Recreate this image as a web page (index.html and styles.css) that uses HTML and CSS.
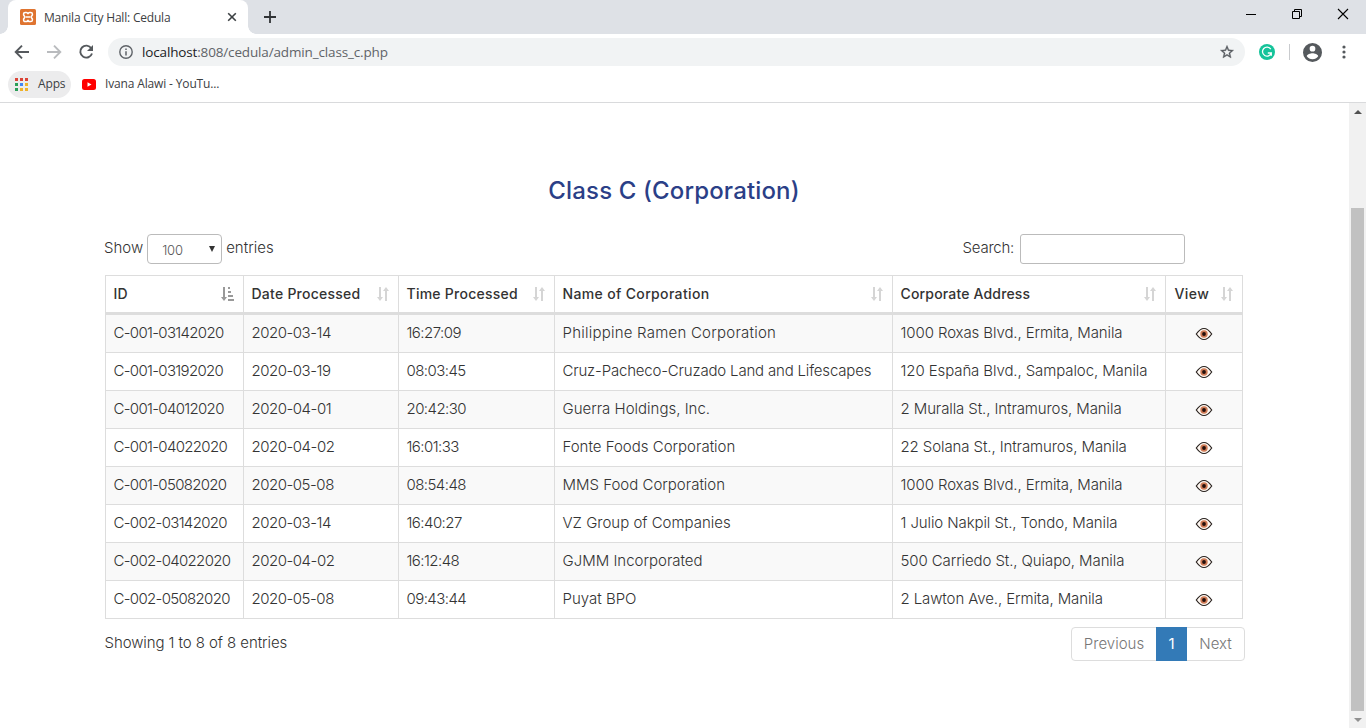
FILE: index.html
```html
<!DOCTYPE html>
<html lang="en">
<head>
<meta charset="utf-8">
<title>Manila City Hall: Cedula</title>
<link rel="stylesheet" href="styles.css">
</head>
<body>
<svg class="defs" width="0" height="0" aria-hidden="true">
  <symbol id="sort" viewBox="0 0 14 14"><path d="M3 0h2v10h2L4 14 1 10h2zM9 14h2V4h2L10 0 7 4h2z"/></symbol>
  <symbol id="sort-asc" viewBox="0 0 15 14"><path d="M3 0h2v10h2L4 14 1 10h2zM8 0h2v2H8zM8 4h3v2H8zM8 8h5v2H8zM8 12h6v2H8z"/></symbol>
  <symbol id="eye" viewBox="0 0 18 14"><path d="M1.300 7Q9-4 16.700 7 9 18 1.300 7z" fill="#fff8f2" stroke="#28211e" stroke-width="1.200"/><circle cx="9" cy="7" r="3.700" fill="#cf7a55"/><circle cx="9" cy="7" r="1.900" fill="#24100c"/></symbol>
</svg>
<div class="browser">
  <header class="tabbar">
    <div class="tab">
      <svg class="favicon" viewBox="0 0 16 16"><rect width="16" height="16" rx="1.500" fill="#df7430"/><path d="M5.300 3.400h.9Q8 3.400 8 5.200q0-1.800 1.800-1.800h.9q1.700 0 1.700 1.700v.9L11 8l1.400 2v.9q0 1.700-1.700 1.700h-.9Q8 12.600 8 10.800q0 1.800-1.800 1.800h-.9q-1.700 0-1.700-1.700V10L5 8 3.600 6v-.9q0-1.700 1.700-1.700zM6 8h4" fill="none" stroke="#fff" stroke-width="1.500"/></svg>
      <span class="tab-title">Manila City Hall: Cedula</span>
      <svg class="tab-close" viewBox="0 0 10 10"><path d="M1.200 1.200l7.600 7.600M8.800 1.200L1.200 8.800" stroke="#3c4043" stroke-width="1.600"/></svg>
    </div>
    <svg class="plus" viewBox="0 0 12 12"><path d="M6 0v12M0 6h12" stroke="#303336" stroke-width="1.800"/></svg>
    <div class="window-buttons">
      <svg viewBox="0 0 12 12"><path d="M1 6.500h10" stroke="#000"/></svg>
      <svg viewBox="0 0 12 12"><path d="M1.500 3.500h7v7h-7zM3.500 3.500v-2h7v7h-2" fill="none" stroke="#000"/></svg>
      <svg viewBox="0 0 12 12"><path d="M1 1l10 10M11 1L1 11" stroke="#000" stroke-width="1.100"/></svg>
    </div>
  </header>
  <div class="toolbar">
    <svg class="nav" viewBox="0 0 16 16"><path d="M15 8H2M8 1.700L1.700 8 8 14.300" fill="none" stroke="#55595d" stroke-width="1.900"/></svg>
    <svg class="nav" viewBox="0 0 16 16"><path d="M1 8h13M8 1.700L14.300 8 8 14.300" fill="none" stroke="#b9bbbe" stroke-width="1.900"/></svg>
    <svg class="nav" viewBox="0 0 16 16"><path d="M13.300 4.300A6 6 0 1 0 14 9.500" fill="none" stroke="#55595d" stroke-width="1.900"/><path d="M15 1v6H9z" fill="#55595d"/></svg>
    <div class="address">
      <svg class="info" viewBox="0 0 14 14"><circle cx="7" cy="7" r="6.200" fill="none" stroke="#5f6368" stroke-width="1.400"/><path d="M7 6.200v4.300M7 3.400v1.500" stroke="#5f6368" stroke-width="1.500"/></svg>
      <span class="url"><b>localhost</b>:808/cedula/admin_class_c.php</span>
      <svg class="star" viewBox="0 0 24 24"><path d="M22 9.240l-7.190-.62L12 2 9.190 8.630 2 9.240l5.460 4.730L5.820 21 12 17.270 18.180 21l-1.630-7.030L22 9.240zM12 15.400l-3.760 2.270 1-4.280-3.320-2.880 4.380-.38L12 6.100l1.710 4.040 4.380.38-3.320 2.880 1 4.280L12 15.400z" fill="#55595d" stroke="#55595d" stroke-width=".5"/></svg>
    </div>
    <svg class="grammarly" viewBox="0 0 16 16"><circle cx="8" cy="8" r="8" fill="#15c39a"/><path d="M11.800 5.200A4.500 4.500 0 1 0 12.300 9H8.800M12.300 8.500v3.300" fill="none" stroke="#fff" stroke-width="1.300"/></svg>
    <i class="separator"></i>
    <svg class="avatar" viewBox="2 2 20 20"><path d="M12 2a10 10 0 1 0 0 20 10 10 0 0 0 0-20zm0 3a3 3 0 1 1 0 6 3 3 0 0 1 0-6zm0 14.200a7.200 7.200 0 0 1-6-3.220c.03-1.990 4-3.080 6-3.080s5.970 1.090 6 3.080a7.200 7.200 0 0 1-6 3.220z" fill="#55595d"/></svg>
    <svg class="menu" viewBox="0 0 4 14"><g fill="#55595d"><circle cx="2" cy="2" r="1.600"/><circle cx="2" cy="7" r="1.600"/><circle cx="2" cy="12" r="1.600"/></g></svg>
  </div>
  <div class="bookmarks">
    <div class="apps"><svg viewBox="0 0 13 13"><path d="M0 0h3v3H0zM5 0h3v3H5zM10 0h3v3h-3z" fill="#db4437"/><path d="M0 5h3v3H0zM0 10h3v3H0z" fill="#2b9f58"/><path d="M5 5h3v3H5z" fill="#4285f4"/><path d="M10 5h3v3h-3zM5 10h3v3H5zM10 10h3v3h-3z" fill="#efb22a"/></svg><span class="apps-label">Apps</span></div>
    <svg class="youtube" viewBox="0 0 14 11"><rect width="14" height="11" rx="2.500" fill="#f00"/><path d="M5.500 3.300v4.400l4-2.200z" fill="#fff"/></svg>
    <span class="bookmark-label">Ivana Alawi - YouTu...</span>
  </div>
</div>
<div class="viewport">
  <main>
    <h1><span>Class C (Corporation)</span></h1>
    <div class="controls">
      <label class="length"><span class="show">Show</span> <span class="select"><span>100</span><svg viewBox="0 0 6 6"><path d="M0 0h6L3 6z" fill="#333"/></svg></span> <span class="entries">entries</span></label>
      <label class="search"><span>Search:</span><input type="text"></label>
    </div>
    <table>
      <colgroup><col class="c-id"><col class="c-date"><col class="c-time"><col class="c-name"><col class="c-address"><col class="c-view"></colgroup>
      <thead><tr>
        <th><div><span class="h-id">ID</span><svg class="active"><use href="#sort-asc"/></svg></div></th>
        <th><div><span class="h-date">Date Processed</span><svg><use href="#sort"/></svg></div></th>
        <th><div><span class="h-time">Time Processed</span><svg><use href="#sort"/></svg></div></th>
        <th><div><span class="h-name">Name of Corporation</span><svg><use href="#sort"/></svg></div></th>
        <th><div><span class="h-address">Corporate Address</span><svg><use href="#sort"/></svg></div></th>
        <th><div><span class="h-view">View</span><svg><use href="#sort"/></svg></div></th>
      </tr></thead>
      <tbody>
        <tr><td>C-001-03142020</td><td>2020-03-14</td><td>16:27:09</td><td class="loose">Philippine Ramen Corporation</td><td>1000 Roxas Blvd., Ermita, Manila</td><td><svg><use href="#eye"/></svg></td></tr>
        <tr><td>C-001-03192020</td><td>2020-03-19</td><td>08:03:45</td><td class="tight">Cruz-Pacheco-Cruzado Land and Lifescapes</td><td>120 España Blvd., Sampaloc, Manila</td><td><svg><use href="#eye"/></svg></td></tr>
        <tr><td>C-001-04012020</td><td>2020-04-01</td><td>20:42:30</td><td>Guerra Holdings, Inc.</td><td>2 Muralla St., Intramuros, Manila</td><td><svg><use href="#eye"/></svg></td></tr>
        <tr><td>C-001-04022020</td><td>2020-04-02</td><td>16:01:33</td><td>Fonte Foods Corporation</td><td>22 Solana St., Intramuros, Manila</td><td><svg><use href="#eye"/></svg></td></tr>
        <tr><td>C-001-05082020</td><td>2020-05-08</td><td>08:54:48</td><td>MMS Food Corporation</td><td>1000 Roxas Blvd., Ermita, Manila</td><td><svg><use href="#eye"/></svg></td></tr>
        <tr><td>C-002-03142020</td><td>2020-03-14</td><td>16:40:27</td><td>VZ Group of Companies</td><td>1 Julio Nakpil St., Tondo, Manila</td><td><svg><use href="#eye"/></svg></td></tr>
        <tr><td>C-002-04022020</td><td>2020-04-02</td><td>16:12:48</td><td>GJMM Incorporated</td><td>500 Carriedo St., Quiapo, Manila</td><td><svg><use href="#eye"/></svg></td></tr>
        <tr><td>C-002-05082020</td><td>2020-05-08</td><td>09:43:44</td><td>Puyat BPO</td><td>2 Lawton Ave., Ermita, Manila</td><td><svg><use href="#eye"/></svg></td></tr>
      </tbody>
    </table>
    <footer>
      <span class="summary">Showing 1 to 8 of 8 entries</span>
      <nav class="pages"><span class="prev">Previous</span><span class="current">1</span><span class="next">Next</span></nav>
    </footer>
  </main>
  <aside class="scrollbar">
    <svg viewBox="0 0 8 4"><path d="M0 4h8L4 0z" fill="#505050"/></svg>
    <div class="thumb"></div>
    <svg viewBox="0 0 8 4"><path d="M0 0h8L4 4z" fill="#909090"/></svg>
  </aside>
</div>
</body>
</html>
```
FILE: styles.css
```css
* { box-sizing: border-box; }
body { margin: 0; width: 1366px; height: 728px; overflow: hidden; display: flex; flex-direction: column; background: #fff; font-family: Inter, "Open Sans", sans-serif; font-weight: 300; font-size: 15px; color: #333; }
svg { display: block; flex: none; }
.defs { display: none; }

.browser { height: 103px; flex: none; border-bottom: 1px solid #d9dadc; font-family: "Open Sans", "Noto Sans", sans-serif; font-weight: 400; }
.tabbar { height: 34px; background: #dee1e6; display: flex; align-items: center; }
.tab { width: 240px; height: 34px; margin-left: 8px; padding: 0 11px 0 12px; border-radius: 8px 8px 0 0; background: #fff; display: flex; align-items: center; position: relative; }
.tab::before, .tab::after { content: ""; position: absolute; bottom: 0; width: 8px; height: 8px; }
.tab::before { left: -8px; background: radial-gradient(circle at 0 0, #dee1e6 7.5px, #fff 8px); }
.tab::after { right: -8px; background: radial-gradient(circle at 100% 0, #dee1e6 7.5px, #fff 8px); }
.favicon { width: 16px; height: 16px; }
.tab-title { margin-left: 8px; font-size: 12px; color: #3c4043; white-space: nowrap; flex: 1; letter-spacing: -.2px; }
.tab-close { width: 10px; height: 10px; }
.plus { width: 12px; height: 12px; margin-left: 16px; }
.window-buttons { margin-left: auto; margin-right: 17px; margin-bottom: 6px; display: flex; gap: 34px; }
.window-buttons svg { width: 12px; height: 12px; }
.toolbar { height: 36px; display: flex; align-items: center; padding-left: 14px; }
.nav { width: 16px; height: 16px; margin-right: 16px; }
.address { width: 1137px; height: 28px; margin-left: -2px; padding: 0 10px 0 11px; border-radius: 14px; background: #f1f3f4; display: flex; align-items: center; }
.info { width: 14px; height: 14px; }
.url { flex: 1; margin-left: 9px; padding-bottom: 1px; font-size: 13.5px; color: #5f6368; letter-spacing: -.15px; }
.url b { font-weight: 400; color: #202124; }
.star { width: 16px; height: 16px; }
.grammarly { width: 16px; height: 16px; margin-left: 14px; }
.separator { width: 1px; height: 16px; margin-left: 14px; background: #c9cbce; }
.avatar { width: 19px; height: 19px; margin-left: 13px; }
.menu { width: 4px; height: 14px; margin-left: 20px; }
.bookmarks { height: 28px; display: flex; align-items: center; padding-left: 8px; font-size: 12px; color: #3c4043; }
.apps { width: 63px; height: 27px; padding-left: 7px; border-radius: 14px; background: #ececed; display: flex; align-items: center; gap: 10px; }
.apps svg { width: 13px; height: 13px; }
.apps-label, .bookmark-label { padding-bottom: 2px; letter-spacing: -.15px; }
.youtube { width: 14px; height: 11px; margin: 0 9px 0 11px; }

.viewport { flex: 1; display: flex; justify-content: space-between; }
main { margin-left: 105px; width: 1140px; }
h1 { margin: 70px 2px 0 0; height: 36px; line-height: 36px; font-size: 24px; font-weight: 450; text-align: center; color: #2b3f87; letter-spacing: .15px; }
.controls { margin: 25px 0 0 -1px; height: 30px; padding-right: 60px; display: flex; justify-content: space-between; }
.length, .search { display: flex; align-items: center; line-height: 30px; }
.length > span:first-child, .entries, .search > span { height: 30px; line-height: 28px; }
.search > span { letter-spacing: -.25px; }
.select { width: 75px; height: 30px; margin: 0 4px; padding: 1px 6px 0 14px; border: 1px solid #bbb; border-radius: 4px; display: flex; align-items: center; justify-content: space-between; font-size: 13px; color: #555; letter-spacing: -.2px; }
.select svg { width: 6px; height: 6px; margin-bottom: 1px; }
input { width: 165px; height: 30px; margin: 0 0 0 6px; border: 1px solid #bbb; border-radius: 3px; background: #fff; }

table { width: 1138px; margin-top: 11px; table-layout: fixed; border-spacing: 0; border-left: 1px solid #ddd; border-top: 1px solid #ddd; }
.c-id { width: 138px; }
.c-date { width: 155px; }
.c-time { width: 156px; }
.c-name { width: 338px; }
.c-address { width: 273px; }
.c-view { width: 77px; }
th, td { padding: 0 0 2px 7.5px; border-right: 1px solid #ddd; border-bottom: 1px solid #ddd; text-align: left; white-space: nowrap; }
th { height: 39px; padding: 0 8px 0 7.5px; border-bottom-width: 3px; font-size: 14px; font-weight: 500; }
th div { display: flex; align-items: center; justify-content: space-between; }
th span { padding-bottom: 1px; letter-spacing: .25px; }
.h-address { letter-spacing: .17px; }
.h-name { letter-spacing: .35px; }
.h-view { padding-left: 1px; letter-spacing: .4px; }
th svg { width: 14px; height: 14px; fill: #d5d5d5; }
th svg.active { width: 15px; fill: #999; }
td { height: 38px; }
td:nth-child(1) { letter-spacing: -.68px; }
td:nth-child(2) { letter-spacing: -.48px; }
td:nth-child(3) { letter-spacing: -.55px; }
td:nth-child(5) { letter-spacing: -.1px; }
td.loose { letter-spacing: .23px; }
td.tight { letter-spacing: -.18px; }
td:last-child { padding: 0; }
td svg { width: 18px; height: 14px; margin: 0 auto; }
tbody tr:nth-child(odd) { background: #f9f9f9; }

footer { height: 50px; display: flex; justify-content: space-between; padding-top: 8px; }
.summary { margin-left: -.5px; line-height: 31px; letter-spacing: -.08px; }
.pages { height: 34px; width: 174px; display: flex; border: 1px solid #ddd; border-radius: 4px; color: #777; line-height: 32px; }
.pages span { text-align: center; }
.prev { width: 84px; }
.pages .current { width: 31px; height: 34px; margin-top: -1px; line-height: 34px; background: #337ab7; color: #fff; font-weight: 400; }
.next { width: 57px; }

.scrollbar { width: 17px; background: #f1f1f1; display: flex; flex-direction: column; align-items: center; }
.scrollbar svg { width: 8px; height: 4px; margin: 7px 0; }
.thumb { width: 13px; height: 503px; margin-top: 87px; background: #c1c1c1; }
```
